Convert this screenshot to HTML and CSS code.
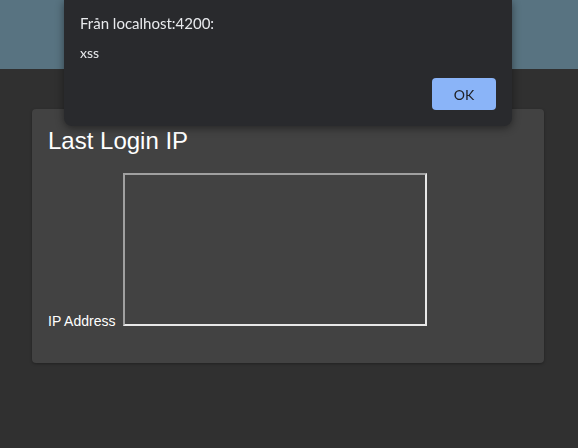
FILE: index.html
```html
<!DOCTYPE html>
<html lang="sv">
<head>
<meta charset="utf-8">
<title>Last Login IP</title>
<link rel="stylesheet" href="styles.css">
</head>
<body>
<header class="topbar"></header>
<main class="content">
  <section class="card">
    <h2 class="card-title">Last Login IP</h2>
    <div class="field"><span class="field-label">IP Address</span><div class="frame"></div></div>
  </section>
</main>
<div class="dialog" role="alertdialog">
  <div class="dialog-title">Från localhost:4200:</div>
  <div class="dialog-msg">xss</div>
  <div class="dialog-actions"><button class="ok-btn">OK</button></div>
</div>
</body>
</html>
```

FILE: styles.css
```css
html, body {
  margin: 0;
  padding: 0;
}
body {
  background: #303030;
  font-family: "Liberation Sans", Arial, sans-serif;
  color: #ffffff;
  height: 448px;
  overflow: hidden;
}
.topbar {
  height: 69px;
  background: #587381;
}
.content {
  padding: 40px 34px 0 32px;
}
.card {
  background: #424242;
  border-radius: 4px;
  padding: 16px 16px 34px 16px;
  box-shadow: 0 1px 3px rgba(0,0,0,0.3);
}
.card-title {
  margin: 0;
  font-size: 24px;
  line-height: 32px;
  font-weight: 400;
}
.field {
  margin-top: 16px;
  font-size: 14px;
  line-height: 16px;
}
.field-label {
  vertical-align: baseline;
}
.frame {
  display: inline-block;
  vertical-align: baseline;
  margin-left: 8px;
  width: 300px;
  height: 149px;
  border-style: solid;
  border-width: 2px;
  border-color: #a0a0a0 #e8e8e8 #e8e8e8 #a0a0a0;
}
.dialog {
  position: fixed;
  top: 0;
  left: 64px;
  width: 448px;
  box-sizing: border-box;
  height: 126px;
  padding: 13px 16px 16px 16px;
  background: #292a2d;
  border-radius: 0 0 8px 8px;
  box-shadow: 0 2px 8px rgba(0,0,0,0.45);
  font-family: Lato, "Open Sans", sans-serif;
  color: #e8eaed;
}
.dialog-title {
  font-size: 15px;
  line-height: 20px;
}
.dialog-msg {
  margin-top: 12px;
  font-size: 14px;
  line-height: 16px;
}
.dialog-actions {
  display: flex;
  justify-content: flex-end;
  margin-top: 17px;
}
.ok-btn {
  width: 64px;
  height: 32px;
  border: none;
  border-radius: 4px;
  background: #8ab4f8;
  color: #202124;
  font-family: Lato, "Open Sans", sans-serif;
  font-size: 14px;
  padding: 0;
}
```
